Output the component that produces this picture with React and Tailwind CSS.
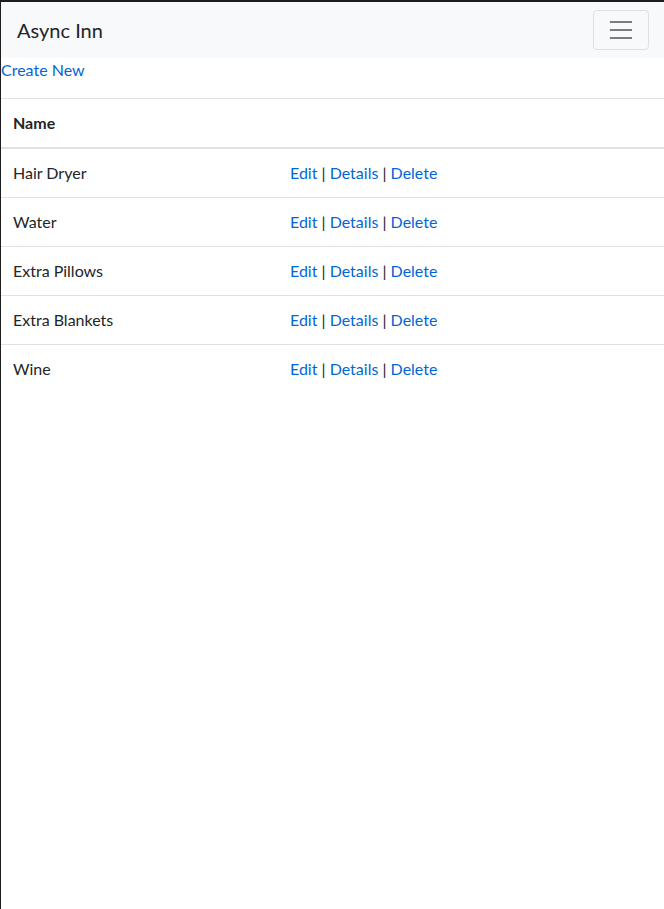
export default function App() {
  const items = ["Hair Dryer", "Water", "Extra Pillows", "Extra Blankets", "Wine"];

  return (
    <div
      className="min-h-[909px] bg-white border-t-2 border-l border-[#1e1e1e] text-[#212529] text-base leading-6"
      style={{ fontFamily: '"Segoe UI", Lato, "Liberation Sans", sans-serif' }}
    >
      <nav className="flex items-center justify-between bg-[#f8f9fa] pl-4 pr-[15px] py-2">
        <a href="#" className="py-[5px] text-xl leading-[30px] text-[#212529]">
          Async Inn
        </a>
        <button className="flex items-center justify-center h-10 w-[56px] border border-black/10 rounded">
          <svg width="30" height="30" viewBox="0 0 30 30">
            <path
              d="M4 7h22M4 15h22M4 23h22"
              stroke="rgba(0,0,0,0.5)"
              strokeWidth="2"
              strokeLinecap="butt"
            />
          </svg>
        </button>
      </nav>

      <p className="mb-4">
        <a href="#" className="text-[#0366d6]">Create New</a>
      </p>

      <table className="w-full border-collapse text-left">
        <thead>
          <tr>
            <th className="w-[277px] p-3 font-bold border-t border-b-2 border-[#dee2e6]">Name</th>
            <th className="p-3 border-t border-b-2 border-[#dee2e6]"></th>
          </tr>
        </thead>
        <tbody>
          {items.map((item, i) => (
            <tr key={item}>
              <td className={`p-3 ${i > 0 ? "border-t border-[#dee2e6]" : ""}`}>{item}</td>
              <td className={`p-3 ${i > 0 ? "border-t border-[#dee2e6]" : ""}`}>
                <a href="#" className="text-[#0366d6]">Edit</a> |{" "}
                <a href="#" className="text-[#0366d6]">Details</a> |{" "}
                <a href="#" className="text-[#0366d6]">Delete</a>
              </td>
            </tr>
          ))}
        </tbody>
      </table>
    </div>
  );
}
